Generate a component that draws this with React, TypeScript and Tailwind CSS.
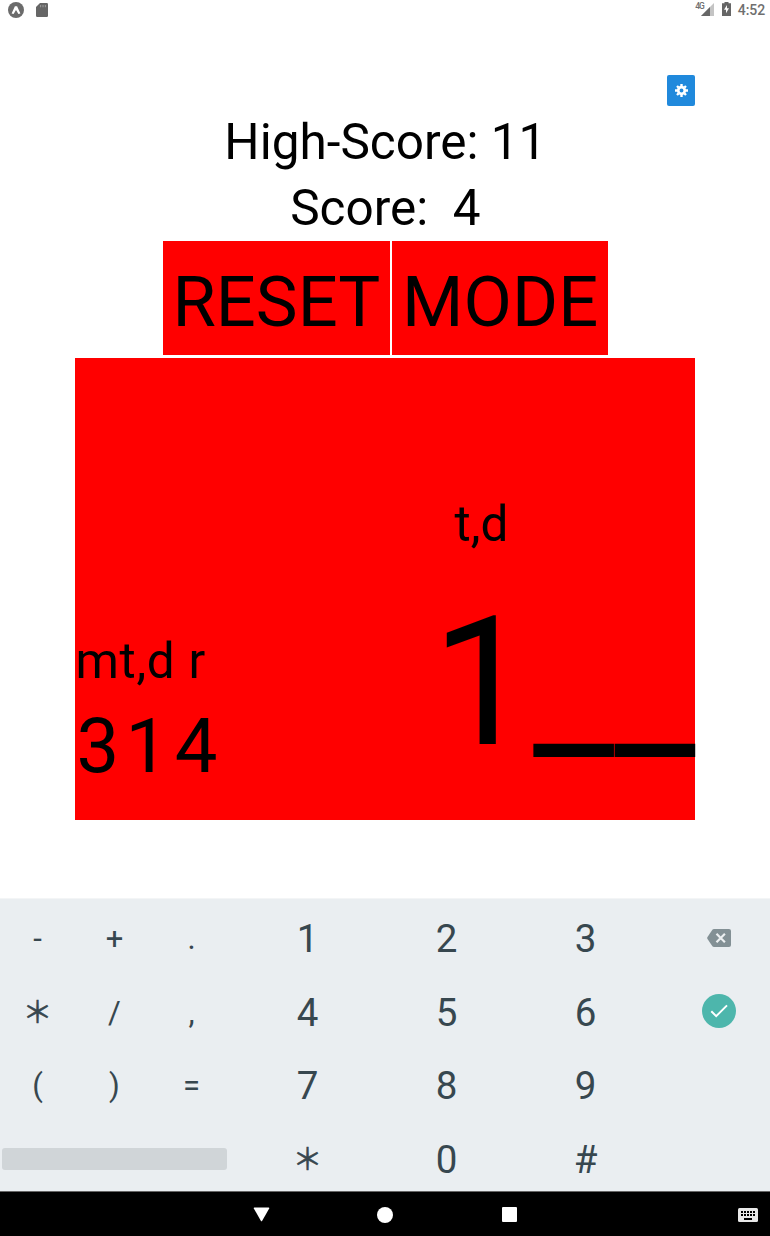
import React from "react";

type Key = { label: string; kind?: "symbol" | "star" };

const rows: { symbols: Key[]; digits: Key[]; action?: "delete" | "done" }[] = [
  {
    symbols: [{ label: "-" }, { label: "+" }, { label: "." }],
    digits: [{ label: "1" }, { label: "2" }, { label: "3" }],
    action: "delete",
  },
  {
    symbols: [{ label: "＊", kind: "star" }, { label: "/" }, { label: "," }],
    digits: [{ label: "4" }, { label: "5" }, { label: "6" }],
    action: "done",
  },
  {
    symbols: [{ label: "(" }, { label: ")" }, { label: "=" }],
    digits: [{ label: "7" }, { label: "8" }, { label: "9" }],
  },
  {
    symbols: [],
    digits: [{ label: "＊", kind: "star" }, { label: "0" }, { label: "#" }],
  },
];

function StatusBar() {
  return (
    <header className="flex h-[20px] items-center justify-between pl-[8px] pr-[5px] text-[#6f6f6f]">
      <div className="flex items-center gap-[12px]">
        <svg width="16" height="16" viewBox="0 0 16 16" className="block">
          <circle cx="8" cy="8" r="8" fill="#6b6b6b" />
          <path d="M3.600 11.400 6.900 4.300h2.200l3.300 7.100-2 .6L8 8l-2.400 4z" fill="#fff" />
        </svg>
        <svg width="12" height="14" viewBox="0 0 12 14" className="block">
          <path d="M4 0h6.800Q12 0 12 1.200v11.600Q12 14 10.800 14H1.200Q0 14 0 12.800V4z" fill="#666" />
          <path d="M4.600 2v2.200M7 2v2.200M9.400 2v2.200" stroke="#999" strokeWidth="1.100" />
        </svg>
      </div>
      <div className="flex items-center">
        <span className="mt-[-8px] text-[8.500px] font-medium leading-[8px] tracking-[-1px]">4G</span>
        <svg width="13" height="13" viewBox="0 0 13 13" className="-ml-[3px] mr-[8px] mt-[-1px] block">
          <path d="M13 0v13H0z" fill="#c4c4c4" />
          <path d="M9 4v9H0z" fill="#666" />
        </svg>
        <svg width="9" height="14" viewBox="0 0 9 14" className="mr-[7px] mt-[-3px] block">
          <path d="M2.500 0h4v1.300H9V14H0V1.300h2.500z" fill="#666" />
          <path d="M5 3 2 7.800h2v3.400L7 6.300H5z" fill="#fff" />
        </svg>
        <span className="text-[14px] font-medium leading-[16px] tracking-[-0.100px]">4:52</span>
      </div>
    </header>
  );
}

function SettingsButton() {
  return (
    <button className="flex h-[31px] w-[28px] items-center justify-center rounded-[2px] bg-[#2089dc]">
      <svg width="13" height="13" viewBox="-6.5 -6.5 13 13" className="block">
        <circle r="3.3" fill="none" stroke="#fff" strokeWidth="2.7" />
        <path
          d="M0-6.500V-4M0 4v2.500M-6.500 0H-4M4 0h2.500M-4.500-4.500l1.500 1.500M3 3l1.500 1.500M-4.500 4.500-3 3M3-3l1.500-1.500"
          stroke="#fff"
          strokeWidth="2.4"
        />
      </svg>
    </button>
  );
}

function Game() {
  return (
    <main className="flex h-[878px] flex-col items-center pl-[75.400px] pr-[74.600px] pt-[55.400px] text-black">
      <div className="flex w-full justify-end">
        <SettingsButton />
      </div>
      <p className="mt-[2.600px] whitespace-pre text-[49.500px] leading-[66px]">High-Score: 11</p>
      <p className="whitespace-pre text-[49.500px] leading-[66px]">Score:  4</p>
      <div className="flex gap-[2px]">
        <button className="flex h-[114px] w-[227.500px] items-center justify-center bg-[#ff0000] pt-[8px] text-[70.400px] leading-[80px]">
          RESET
        </button>
        <button className="flex h-[114px] w-[216px] items-center justify-center bg-[#ff0000] pt-[8px] text-[70.400px] leading-[80px]">
          MODE
        </button>
      </div>
      <section className="mt-[3.200px] flex h-[462px] w-full shrink-0 items-end justify-between bg-[#ff0000]">
        <div className="pb-[24px]">
          <p className="whitespace-pre text-[49.500px] leading-[66px] tracking-[0.700px]">mt,d r</p>
          <p className="mt-[2px] pl-[1px] text-[76px] leading-[100px] tracking-[6.500px]">314</p>
        </div>
        <div className="flex h-full flex-col items-end">
          <p className="mr-[187px] mt-[133px] text-[49.500px] leading-[66px]">t,d</p>
          <p className="mt-[20px] flex text-[180px] leading-[212px]">
            <span>1</span>
            <span>__</span>
          </p>
        </div>
      </section>
    </main>
  );
}

function DeleteIcon() {
  return (
    <svg width="24" height="18" viewBox="0 0 24 18" className="mb-[2px] block">
      <path d="M7 0h15q2 0 2 2v14q0 2-2 2H7q-1 0-1.600-.8L.5 10q-.6-1 0-2L5.400.8Q6 0 7 0z" fill="#839095" />
      <path d="m9.500 4.800 8.400 8.400m0-8.400-8.400 8.400" stroke="#eceff1" strokeWidth="2.200" />
    </svg>
  );
}

function DoneIcon() {
  return (
    <svg width="34" height="34" viewBox="0 0 34 34" className="mb-[3px] block">
      <circle cx="17" cy="17" r="17" fill="#4db6ac" />
      <path d="m9.300 17.300 4.900 4.900 10.800-10.800" fill="none" stroke="#fff" strokeWidth="2" />
    </svg>
  );
}

function Keyboard() {
  return (
    <section className="flex h-[293px] flex-col overflow-hidden border-t border-[#f3f5f6] bg-[#eaeef1] pt-[3px] text-[#37474f]">
      {rows.map((row, i) => (
        <div
          key={i}
          className="-ml-[1px] grid h-[73.700px] shrink-0 grid-cols-[77px_77px_77px_8px_139px_139px_139px_13px_1fr] items-center justify-items-center"
        >
          {row.symbols.length > 0 ? (
            row.symbols.map((key) => (
              <button
                key={key.label}
                className={
                  key.kind === "star"
                    ? "text-[30px] leading-[40px] [-webkit-text-stroke:0.500px_#37474f]"
                    : "text-[31px] leading-[40px]"
                }
              >
                {key.label}
              </button>
            ))
          ) : (
            <button className="col-span-3 mb-[2px] mr-[1px] h-[22px] w-[225px] rounded-[3px] bg-[#d0d5d8]" aria-label="Space" />
          )}
          <span />
          {row.digits.map((key) => (
            <button
              key={key.label}
              className={
                key.kind === "star"
                  ? "text-[30px] leading-[44px] [-webkit-text-stroke:0.500px_#37474f]"
                  : "text-[38.500px] leading-[44px]"
              }
            >
              {key.label}
            </button>
          ))}
          <span />
          {row.action === "delete" && <DeleteIcon />}
          {row.action === "done" && <DoneIcon />}
        </div>
      ))}
    </section>
  );
}

function NavigationBar() {
  return (
    <nav className="flex h-[45px] items-center border-t border-[#666] bg-black pl-[253px] pr-[12px] pt-[1px]">
      <svg width="17" height="15" viewBox="0 0 17 15" className="block">
        <path d="M1.300.5h14.400q1 0 .5 1L9.200 13.800q-.7 1-1.400 0L.8 1.500q-.5-1 .5-1z" fill="#fff" />
      </svg>
      <span className="ml-[107.200px] size-[16px] rounded-full bg-white" />
      <span className="ml-[108.800px] size-[15px] rounded-[1px] bg-white" />
      <svg width="20" height="14" viewBox="0 0 20 14" className="ml-auto block">
        <rect width="20" height="14" rx="1.500" fill="#e8e8e8" />
        <path d="M3 4h14M3 7h14" stroke="#000" strokeWidth="2" strokeDasharray="2 1" />
        <path d="M6 11h8" stroke="#000" strokeWidth="2" />
      </svg>
    </nav>
  );
}

export default function App() {
  return (
    <div className="h-[1236px] w-[770px] overflow-hidden bg-white font-['Roboto','Noto_Sans_CJK_JP',sans-serif]">
      <StatusBar />
      <Game />
      <Keyboard />
      <NavigationBar />
    </div>
  );
}
